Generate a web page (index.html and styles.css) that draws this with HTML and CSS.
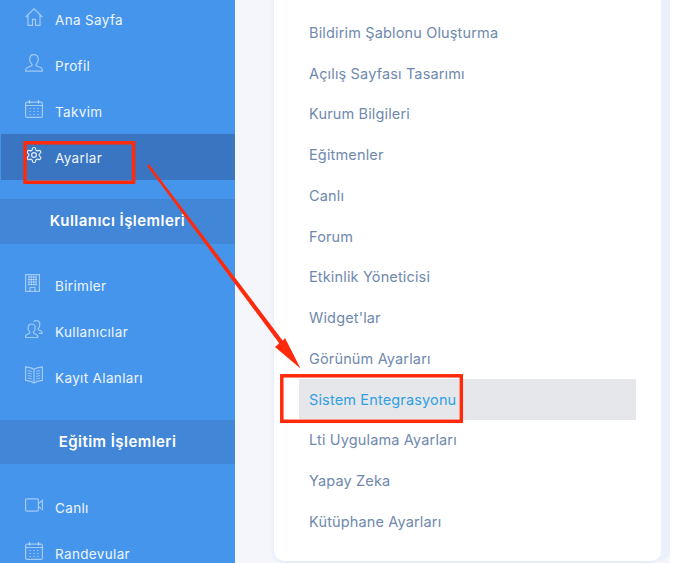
FILE: index.html
```html
<!DOCTYPE html>
<html lang="tr">
<head>
<meta charset="utf-8">
<title>Ayarlar</title>
<link rel="stylesheet" href="styles.css">
</head>
<body>
<div class="layout">
  <nav class="sidebar">
    <a class="item top first">
      <svg class="icon" viewBox="0 0 18 18"><path d="M.7 9 9 .8 17.300 9M3 7v10.300h4.500v-6h3v6H15V7"/></svg>
      <span>Ana Sayfa</span>
    </a>
    <a class="item top">
      <svg class="icon" viewBox="0 0 18 18"><path d="M9 .6c2.700 0 4.300 2 4.300 4.600 0 2.300-1 4-2 5-.6.700-.3 1.500.5 1.800l3.800 1.500c1.200.5 1.700 1.300 1.700 2.400v1.300H.7V15.900c0-1.100.5-1.900 1.700-2.400l3.800-1.500c.8-.3 1.100-1.100.5-1.800-1-1-2-2.700-2-5C4.700 2.600 6.300.6 9 .6z"/></svg>
      <span>Profil</span>
    </a>
    <a class="item top">
      <svg class="icon" viewBox="0 0 18 18"><rect x=".6" y="2.200" width="16.800" height="15.200" rx="1.500"/><path d="M.6 5.500h16.800M4.500 0v3.500M13.500 0v3.500"/><path class="dots" d="M4.500 8.500h1.500M8.300 8.500h1.500M12 8.500h1.500M4.500 11.500h1.500M8.300 11.500h1.500M12 11.500h1.500M4.500 14.500h1.500M8.300 14.500h1.500M12 14.500h1.500"/></svg>
      <span>Takvim</span>
    </a>
    <a class="item top active">
      <svg class="icon gear" viewBox="0 0 24 24"><path d="M12.220 2h-.44a2 2 0 0 0-2 2v.18a2 2 0 0 1-1 1.730l-.43.250a2 2 0 0 1-2 0l-.15-.08a2 2 0 0 0-2.730.730l-.22.380a2 2 0 0 0 .730 2.730l.15.1a2 2 0 0 1 1 1.720v.51a2 2 0 0 1-1 1.740l-.15.09a2 2 0 0 0-.73 2.730l.22.380a2 2 0 0 0 2.730.730l.15-.08a2 2 0 0 1 2 0l.43.250a2 2 0 0 1 1 1.730V20a2 2 0 0 0 2 2h.44a2 2 0 0 0 2-2v-.18a2 2 0 0 1 1-1.730l.43-.25a2 2 0 0 1 2 0l.15.08a2 2 0 0 0 2.730-.73l.22-.39a2 2 0 0 0-.73-2.730l-.15-.08a2 2 0 0 1-1-1.740v-.5a2 2 0 0 1 1-1.740l.15-.09a2 2 0 0 0 .73-2.730l-.22-.38a2 2 0 0 0-2.730-.73l-.15.08a2 2 0 0 1-2 0l-.43-.25a2 2 0 0 1-1-1.730V4a2 2 0 0 0-2-2z"/><circle cx="12" cy="12" r="3.200"/></svg>
      <span>Ayarlar</span>
    </a>
    <h2 class="section">Kullanıcı İşlemleri</h2>
    <a class="item">
      <svg class="icon" viewBox="0 0 18 18"><rect x=".6" y=".6" width="13.800" height="16.800"/><path class="dots" d="M3 3h9M3 5.500h9M3 8h9M3 10.500h9M4 1.500v10M6.300 1.500v10M8.700 1.500v10M11 1.500v10"/><path d="M5 17.400v-3.900h5v3.900"/></svg>
      <span>Birimler</span>
    </a>
    <a class="item">
      <svg class="icon" viewBox="0 0 18 18"><path d="M6.500 4c2.300 0 3.700 1.700 3.700 4 0 1.800-.8 3.200-1.600 4-.5.600-.3 1.200.4 1.500l2.400 1c.9.400 1.300 1 1.300 1.800v1.200H.6v-1.200c0-.8.4-1.400 1.300-1.800l2.400-1c.7-.3.900-.9.400-1.500-.8-.8-1.600-2.200-1.600-4C3.100 5.700 4.200 4 6.500 4z"/><path d="M8.500 1.700C9.200 1 10.100.6 11.200.6c2.300 0 3.600 1.700 3.600 4 0 1.800-.7 3.200-1.500 4-.5.600-.3 1.100.4 1.400l2 .8c.9.400 1.300 1 1.300 1.700v.9h-3.200"/></svg>
      <span>Kullanıcılar</span>
    </a>
    <a class="item">
      <svg class="icon" viewBox="0 0 18 18"><path d="M9 3.500C7 1.800 3.500 1.200.6.900v13.400c3 .3 6.400.9 8.400 2.800 2-1.900 5.400-2.500 8.400-2.800V.9C14.500 1.200 11 1.800 9 3.500zM9 3.500v13.600"/><path class="dots" d="M2.800 4.500l4 .9M2.800 7l4 .9M2.800 9.500l4 .9M2.800 12l4 .9M15.200 4.500l-4 .9M15.200 7l-4 .9M15.200 9.500l-4 .9M15.200 12l-4 .9"/></svg>
      <span>Kayıt Alanları</span>
    </a>
    <h2 class="section last">Eğitim İşlemleri</h2>
    <a class="item">
      <svg class="icon" viewBox="0 0 18 18"><path d="M1.800 2.800h10.400c.7 0 1.200.5 1.200 1.200v10c0 .7-.5 1.200-1.200 1.200H1.800c-.7 0-1.200-.5-1.200-1.200V4c0-.7.5-1.200 1.200-1.200zM13.400 7.500l4-3v9l-4-3"/></svg>
      <span>Canlı</span>
    </a>
    <a class="item">
      <svg class="icon" viewBox="0 0 18 18"><rect x=".6" y="2.200" width="16.800" height="15.200" rx="1.500"/><path d="M.6 5.500h16.800M4.500 0v3.500M13.500 0v3.500"/><path class="dots" d="M4.500 8.500h1.500M8.300 8.500h1.500M12 8.500h1.500M4.500 11.500h1.500M8.300 11.500h1.500M12 11.500h1.500M4.500 14.500h1.500M8.300 14.500h1.500M12 14.500h1.500"/></svg>
      <span>Randevular</span>
    </a>
  </nav>
  <main class="main">
    <ul class="card">
      <li class="row">Bildirim Şablonu Oluşturma</li>
      <li class="row">Açılış Sayfası Tasarımı</li>
      <li class="row">Kurum Bilgileri</li>
      <li class="row">Eğitmenler</li>
      <li class="row">Canlı</li>
      <li class="row">Forum</li>
      <li class="row">Etkinlik Yöneticisi</li>
      <li class="row">Widget'lar</li>
      <li class="row">Görünüm Ayarları</li>
      <li class="row current">Sistem Entegrasyonu</li>
      <li class="row">Lti Uygulama Ayarları</li>
      <li class="row">Yapay Zeka</li>
      <li class="row">Kütüphane Ayarları</li>
    </ul>
  </main>
</div>
<svg class="marks" viewBox="0 0 688 563" aria-hidden="true">
  <rect class="mark-edge" x="283.500" y="377.500" width="176" height="42"/>
  <rect class="mark" x="25" y="142.800" width="108.500" height="39.500"/>
  <rect class="mark" x="281.800" y="375.800" width="179.500" height="45.500"/>
  <polygon class="arrow" points="147,165.700 149,164.300 282.800,340.700 285,338 300.500,368.500 275,347 279.200,343.300"/>
</svg>
</body>
</html>
```

FILE: styles.css
```css
* {
  box-sizing: border-box;
}

html,
body {
  margin: 0;
  height: 563px;
  overflow: hidden;
  background: #fff;
}

body {
  position: relative;
  font-family: Inter, "Open Sans", "Liberation Sans", sans-serif;
}

.layout {
  display: flex;
  width: 670px;
  height: 563px;
}

.sidebar {
  flex: 0 0 235px;
  height: 563px;
  overflow: hidden;
  background: #4695ec;
  color: #eef5fe;
}

.item {
  display: flex;
  align-items: center;
  height: 46px;
  padding-left: 25px;
  font-size: 13.500px;
  letter-spacing: .35px;
}

.item.top {
  padding-top: 2px;
}

.item.first {
  height: 42px;
  padding-bottom: 4px;
}

.item.active {
  margin-left: 1px;
  padding-left: 24px;
  background: #3975c0;
}

.icon {
  flex: 0 0 18px;
  width: 18px;
  height: 18px;
  margin: -6px 12px 0 0;
  fill: none;
  stroke: rgba(255, 255, 255, .5);
  stroke-width: 1.200;
}

.icon .dots {
  stroke-width: 1;
  stroke: rgba(255, 255, 255, .45);
}

.icon.gear {
  stroke: rgba(255, 255, 255, .85);
  stroke-width: 1.600;
}

.section {
  display: flex;
  align-items: center;
  justify-content: center;
  height: 45px;
  margin: 19px 0;
  padding-bottom: 2px;
  background: #4286d8;
  color: #fff;
  font-size: 15px;
  font-weight: 600;
  letter-spacing: .45px;
}

.section.last {
  height: 44px;
  margin-bottom: 21px;
}

.main {
  flex: 1;
  height: 563px;
  padding: 0 9px 2px 39px;
  background: #f4f6fc;
}

.card {
  height: 561px;
  margin: 0;
  padding: 12px 25px 0;
  list-style: none;
  background: #fff;
  border-radius: 0 0 10px 10px;
  box-shadow: 9px 0 0 #ebf0fb, -2px 0 3px #eaeffb, 0 2px 2px #e2e9fa;
}

.row {
  display: flex;
  align-items: center;
  height: 40.750px;
  padding-left: 10px;
  color: #6f89ae;
  font-size: 14.500px;
  letter-spacing: .15px;
}

.row.current {
  background: #e6e7eb;
  color: #2f9fe2;
}

.marks {
  position: absolute;
  left: 0;
  top: 0;
  width: 688px;
  height: 563px;
  pointer-events: none;
}

.mark {
  fill: none;
  stroke: #ff2a0c;
  stroke-width: 3.500;
}

.mark-edge {
  fill: none;
  stroke: rgba(255, 255, 255, .6);
  stroke-width: 1;
}

.arrow {
  fill: #ff2a0c;
}
```
